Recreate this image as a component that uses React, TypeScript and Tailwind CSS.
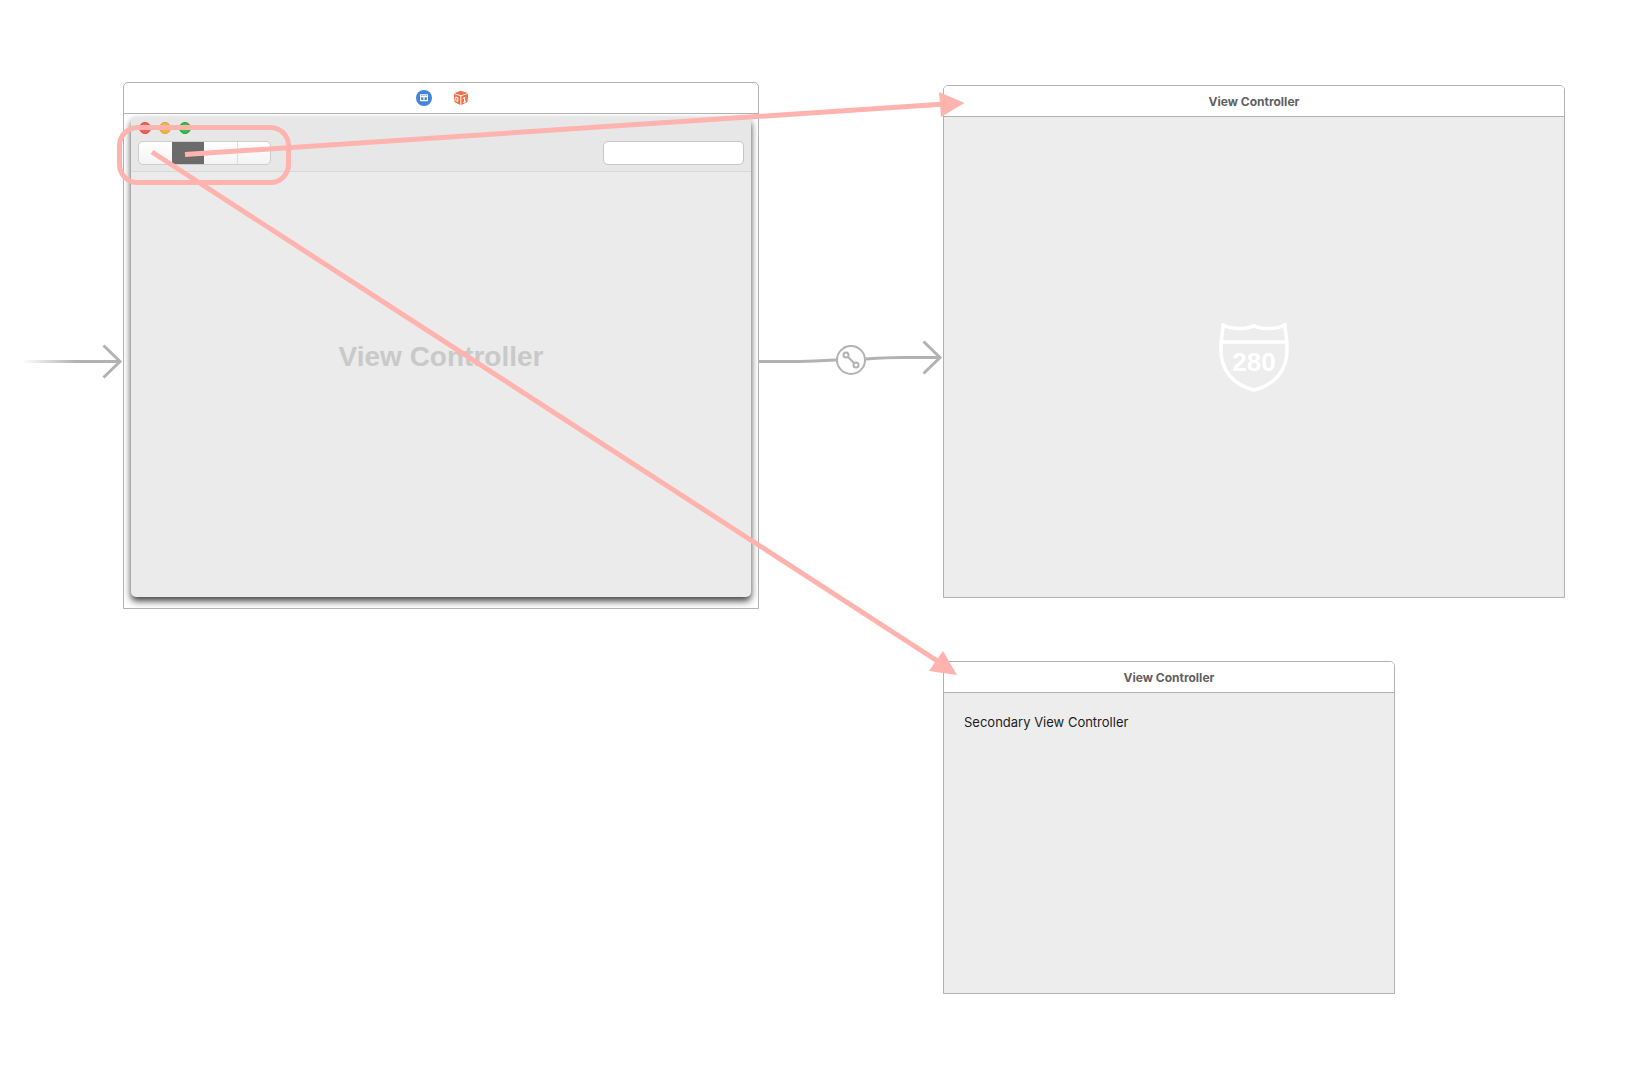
import type { ReactNode } from "react";
import clsx from "clsx";

const segments = ["First", "Second", "Third", "Fourth"];

function SceneHeader({ children }: { children: ReactNode }) {
  return (
    <header className="flex h-[31px] shrink-0 items-center justify-center border-b border-[#b2b2b2] bg-white pt-0.5">
      {children}
    </header>
  );
}

function SceneTitle({ children }: { children: ReactNode }) {
  return <h2 className="font-['Inter',sans-serif] text-xs font-bold text-[#606060]">{children}</h2>;
}

function ControllerIcon() {
  return (
    <svg viewBox="0 0 16 16" className="size-4" aria-hidden="true">
      <circle cx="8" cy="8" r="8" fill="#4285d8" />
      <rect x="4" y="4.2" width="8" height="7" rx="0.4" fill="#fff" />
      <path d="M5 5.6h1.3M7.3 5.6h1.3M9.6 5.6h1.3" stroke="#4285d8" strokeWidth="0.8" />
      <path d="M5.2 7.2h2.2v2.8H5.2zM8.6 7.2h2.2v2.8H8.6z" fill="#4285d8" />
    </svg>
  );
}

function ResponderIcon() {
  return (
    <svg viewBox="0 0 16 16" className="size-4" aria-hidden="true">
      <path d="M7.4.8 15 3 8 5.2 1.2 3.2z" fill="#ee7047" />
      <path d="M.8 4 7.3 6v9L1.5 12z" fill="#ee7047" />
      <path d="M8.3 6 15.2 3.8 14.5 12 8.3 15z" fill="#ee7047" />
      <path d="M2.6 7 4.8 7.6v3.8L2.8 10.6z" fill="none" stroke="#fff" strokeWidth="1" />
      <path d="M10 8.4 11.6 7.6v4.2M10.2 12.4l2.8-1" fill="none" stroke="#fff" strokeWidth="1.1" />
    </svg>
  );
}

function HighwayShield() {
  return (
    <svg viewBox="0 0 72 72" className="size-[72px]" role="img" aria-label="280">
      <g fill="none" stroke="#fff" strokeWidth="3.5" strokeLinejoin="round">
        <path d="M5 3.500C11 8.500 29 9 36 4.500C43 9 61 8.500 67 3.500C67 11 69 16 69 26C70 50 56 64 36 69C16 64 2 50 3 26C3 16 5 11 5 3.500Z" />
        <path d="M3 21H69" />
      </g>
      <text
        x="36"
        y="50"
        textAnchor="middle"
        className="fill-white font-['Liberation_Sans_Narrow','Liberation_Sans',sans-serif] text-[26px] font-bold"
      >
        280
      </text>
    </svg>
  );
}

function WindowScene() {
  return (
    <section className="absolute top-[82px] left-[123px] flex h-[527px] w-[636px] flex-col rounded-t-[5px] border border-[#b2b2b2] bg-white">
      <header className="flex h-[31px] shrink-0 items-center justify-center gap-[21px] rounded-t-[5px] border-b border-[#b2b2b2] pl-0.5">
        <ControllerIcon />
        <ResponderIcon />
      </header>
      <div className="flex flex-1 overflow-hidden px-[7px] pt-[3px] pb-[11px]">
        <div className="flex flex-1 flex-col rounded-[5px] bg-[#ebebeb] shadow-[0_4px_7px_0_rgba(0,0,0,0.75)]">
          <div className="flex h-[55px] shrink-0 flex-col gap-[7px] rounded-t-[5px] border-b border-[#d8d8d8] bg-[#e7e7e7] px-[7px] pt-[5px]">
            <div className="flex gap-2 px-px">
              <button aria-label="Close" className="size-3 rounded-full border border-[#e2473f] bg-[#f2625c]" />
              <button aria-label="Minimize" className="size-3 rounded-full border border-[#e0a035] bg-[#fab13c]" />
              <button aria-label="Zoom" className="size-3 rounded-full border border-[#22a52e] bg-[#33bf42]" />
            </div>
            <div className="flex items-center justify-between">
              <div className="flex h-6 w-[133px] overflow-hidden rounded-[5px] border border-[#cdcdcd] bg-linear-to-b from-white to-[#f4f4f4]">
                {segments.map((name, i) => (
                  <button
                    key={name}
                    aria-label={name}
                    className={clsx("flex-1", i === 1 && "bg-[#6b6b6b]", i === 3 && "border-l border-[#dedede]")}
                  />
                ))}
              </div>
              <input
                type="search"
                aria-label="Search"
                className="h-6 w-[141px] rounded-[5px] border border-[#c6c6c6] bg-white px-2 text-xs outline-none"
              />
            </div>
          </div>
          <div className="flex flex-1 items-center justify-center pb-14">
            <h1 className="font-['Liberation_Sans',Arial,sans-serif] text-[28px] font-bold text-[#c9c9c9]">
              View Controller
            </h1>
          </div>
        </div>
      </div>
    </section>
  );
}

function Connections() {
  return (
    <svg className="pointer-events-none absolute top-0 left-0 h-[1072px] w-[1640px]" viewBox="0 0 1640 1072" aria-hidden="true">
      <defs>
        <linearGradient id="entry" gradientUnits="userSpaceOnUse" x1="22" y1="0" x2="76" y2="0">
          <stop offset="0" stopColor="#b2b2b2" stopOpacity="0" />
          <stop offset="1" stopColor="#b2b2b2" />
        </linearGradient>
      </defs>
      <path d="M22 361.5H121" stroke="url(#entry)" strokeWidth="3" />
      <g fill="none" stroke="#b2b2b2" strokeWidth="3">
        <path d="M103.5 345.5 120 361.5 103.5 377.5" />
        <path d="M759 361.5H800Q812 361.3 836 360" />
        <path d="M866 359Q888 357.5 900 357.5H940" />
        <path d="M923.5 341.5 940 357.5 923.5 373.5" />
      </g>
      <g fill="none" stroke="#b2b2b2" strokeWidth="2">
        <circle cx="851" cy="360" r="14" fill="#fff" />
        <circle cx="846" cy="355" r="2.5" />
        <circle cx="856" cy="365" r="2.5" />
        <path d="M848 357 854 363" />
      </g>
      <g fill="none" stroke="#ffb3ae" strokeWidth="5">
        <rect x="119.5" y="127.5" width="169" height="55" rx="18" />
        <path d="M185 154.5 945 104" />
        <path d="M152 152 942 664" />
      </g>
      <path d="M939 92 964.5 103 941 117Z" fill="#ffb3ae" />
      <path d="M943 651 957 675 929 671Z" fill="#ffb3ae" />
    </svg>
  );
}

export default function App() {
  return (
    <main className="relative min-h-screen overflow-hidden bg-white">
      <WindowScene />

      <section className="absolute top-[85px] left-[943px] flex h-[513px] w-[622px] flex-col overflow-hidden rounded-t-[5px] border border-[#b2b2b2] bg-[#ededed]">
        <SceneHeader>
          <SceneTitle>View Controller</SceneTitle>
        </SceneHeader>
        <div className="flex flex-1 items-center justify-center">
          <HighwayShield />
        </div>
      </section>

      <section className="absolute top-[661px] left-[943px] flex h-[333px] w-[452px] flex-col overflow-hidden rounded-t-[5px] border border-[#b2b2b2] bg-[#ededed]">
        <SceneHeader>
          <SceneTitle>View Controller</SceneTitle>
        </SceneHeader>
        <p className="px-5 pt-[19px] font-['Inter',sans-serif] text-[13px] leading-5 text-[#1c1c1c]">
          Secondary View Controller
        </p>
      </section>

      <Connections />
    </main>
  );
}
